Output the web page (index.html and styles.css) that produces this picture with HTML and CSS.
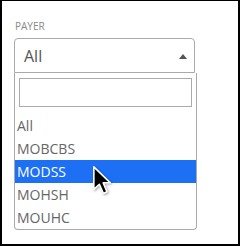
FILE: index.html
```html
<!DOCTYPE html>
<html>
<head>
<meta charset="utf-8">
<link rel="stylesheet" href="styles.css">
</head>
<body>
<div class="frame">
  <div class="field">
    <div class="label">PAYER</div>
    <div class="select">
      <span class="value">All</span>
      <span class="arrow"></span>
    </div>
    <div class="dropdown">
      <div class="search"><div class="input"></div></div>
      <ul class="options">
        <li>All</li>
        <li>MOBCBS</li>
        <li class="hl">MODSS</li>
        <li>MOHSH</li>
        <li>MOUHC</li>
      </ul>
      <svg class="cursor" width="22" height="31" viewBox="0 0 18 25.4">
        <path d="M1.5 1.5 L1.5 20 L6 15.8 L9.3 23.3 L12.3 22 L9.2 14.6 L15 14.6 Z" fill="#000" stroke="#fff" stroke-width="1.3" stroke-linejoin="round"/>
      </svg>
    </div>
  </div>
</div>
</body>
</html>
```
FILE: styles.css
```css
html, body {
  margin: 0;
  padding: 0;
  background: #fff;
}
.frame {
  width: 240px;
  height: 246px;
  box-sizing: border-box;
  border: 2px solid #000;
  border-top-width: 1px;
  padding: 19px 0 0 12px;
  font-family: "Open Sans", sans-serif;
}
.field {
  width: 183px;
}
.label {
  font-size: 10px;
  line-height: 12px;
  color: #8a8a8a;
  height: 18px;
  padding-left: 1px;
}
.select {
  width: 181px;
  height: 35px;
  box-sizing: border-box;
  border: 1px solid #aaa;
  border-radius: 4px 4px 0 0;
  display: flex;
  align-items: center;
  justify-content: space-between;
  padding: 0 7px 0 9px;
}
.value {
  font-size: 16px;
  color: #555;
  line-height: 20px;
}
.arrow {
  width: 0;
  height: 0;
  border-style: solid;
  border-width: 0 4px 5px 4px;
  border-color: transparent transparent #555 transparent;
  margin-top: 2px;
}
.dropdown {
  position: relative;
  width: 183px;
  box-sizing: border-box;
  border: 1px solid #aaa;
  border-top: none;
  border-radius: 0 0 4px 4px;
}
.search {
  padding: 5px 4px 7px 4px;
}
.input {
  height: 29px;
  box-sizing: border-box;
  border: 1px solid #aaa;
}
.options {
  list-style: none;
  margin: 0;
  padding: 0;
}
.options li {
  height: 23px;
  line-height: 23px;
  font-size: 14px;
  color: #666;
  padding-left: 2px;
}
.options li.hl {
  background: #1d6ff3;
  color: #fff;
}
.cursor {
  position: absolute;
  left: 77px;
  top: 92px;
  filter: drop-shadow(1px 1px 1px rgba(0,0,0,0.35));
}
```
